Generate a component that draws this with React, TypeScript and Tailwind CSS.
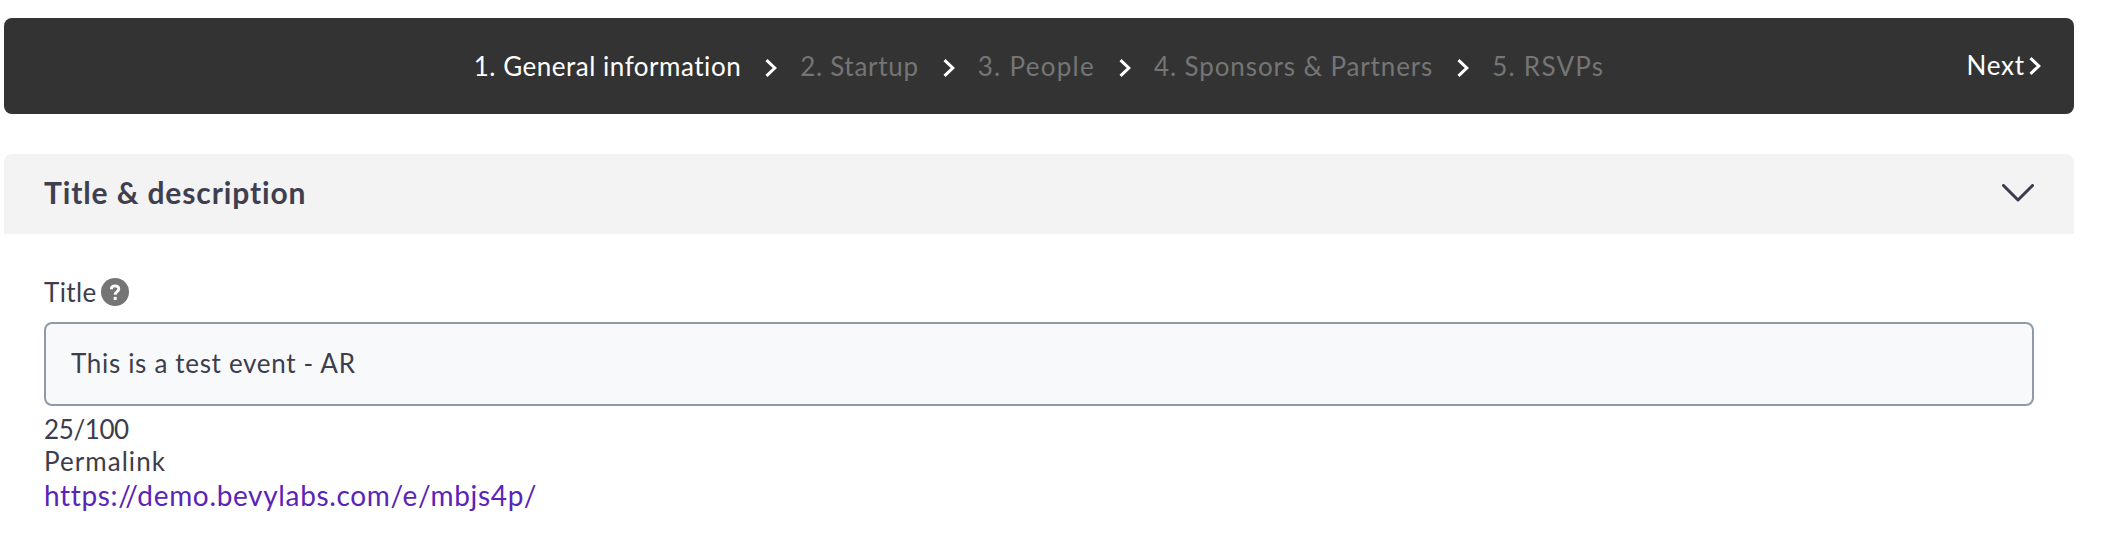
import React from 'react';

const steps = [
  { label: '1. General information', className: 'text-white tracking-[0.52px]' },
  { label: '2. Startup', className: 'text-[#757575] tracking-[0.7px]' },
  { label: '3. People', className: 'text-[#757575] tracking-[1.3px]' },
  { label: '4. Sponsors & Partners', className: 'text-[#757575] tracking-[0.88px]' },
  { label: '5. RSVPs', className: 'text-[#757575] tracking-[1.25px]' },
];

const StepArrow = ({ className = '' }: { className?: string }) => (
  <svg viewBox="0 0 12 18" fill="none" className={`w-3 h-[18px] shrink-0 ${className}`}>
    <path d="M1.5 1.2 9.8 9 1.5 16.8" stroke="#fff" strokeWidth="3" />
  </svg>
);

const HelpIcon = () => (
  <svg viewBox="0 0 28 28" fill="none" className="w-7 h-7 ml-1">
    <circle cx="14" cy="14" r="14" fill="#757575" />
    <path d="M10.3 11.2c0-2.2 1.6-3.4 3.8-3.4s3.7 1.2 3.7 3.1c0 2.7-3.6 2.8-3.6 5.9" stroke="#fff" strokeWidth="2.8" />
    <path d="M12.7 18.9h3v3h-3z" fill="#fff" />
  </svg>
);

const StepBar = () => (
  <nav className="flex items-center h-24 px-[33px] rounded-lg bg-[#333333] text-[26px] leading-8 whitespace-nowrap">
    <div className="flex-1" />
    <ol className="flex items-center">
      {steps.map((step, i) => (
        <li key={step.label} className="flex items-center">
          {i > 0 && <StepArrow className="ml-6 mr-[23px] mt-1" />}
          <span className={step.className}>{step.label}</span>
        </li>
      ))}
    </ol>
    <div className="flex flex-1 justify-end pb-0.5">
      <button className="flex items-center gap-1 text-white tracking-[0.8px]">
        Next
        <StepArrow className="mt-0.5" />
      </button>
    </div>
  </nav>
);

const App: React.FC = () => {
  const title = 'This is a test event - AR';

  return (
    <main className="h-[537px] overflow-hidden bg-white pt-[18px] pl-1 pr-8 font-[Lato,sans-serif] text-[#3d3d4c]">
      <StepBar />

      <section className="mt-10">
        <header className="flex items-center justify-between h-20 px-10 rounded-t-lg bg-[#f3f3f3]">
          <h2 className="pb-[5px] text-[30px] leading-9 font-bold tracking-[0.88px] text-[#3f3f50]">Title & description</h2>
          <svg viewBox="0 0 32 18" fill="none" className="w-8 h-[18px] -mt-0.5">
            <path d="M1.5 1.5 16 16 30.5 1.5" stroke="#3b3b4f" strokeWidth="3" strokeLinecap="round" strokeLinejoin="round" />
          </svg>
        </header>

        <div className="px-10 pt-[42px] text-[26px] leading-8">
          <div className="flex items-center">
            <label htmlFor="title" className="tracking-[0.4px]">Title</label>
            <HelpIcon />
          </div>
          <input
            id="title"
            defaultValue={title}
            className="block w-full h-[84px] mt-3.5 pl-[25px] pb-0.5 rounded-lg border-2 border-[#8f9ba8] bg-[#f8f9fb] tracking-[0.68px] outline-none"
          />
          <p className="mt-[7px] -tracking-[0.4px]">{title.length}/100</p>
          <p className="tracking-[1.05px]">Permalink</p>
          <a href="#" className="block text-[28px] leading-9 tracking-[0.66px] text-[#5a24b8]">
            https://demo.bevylabs.com/e/mbjs4p/
          </a>
        </div>
      </section>
    </main>
  );
};

export default App;
